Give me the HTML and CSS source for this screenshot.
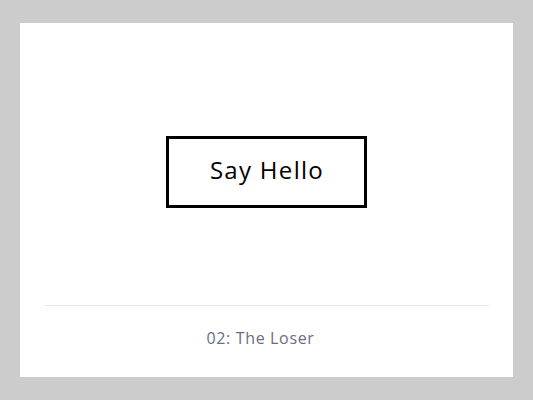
FILE: index.html
```html
<!DOCTYPE html>
<html lang="en">
<head>
<meta charset="utf-8">
<title>Say Hello</title>
<link rel="stylesheet" href="styles.css">
</head>
<body>
<div class="card">
  <div class="stage">
    <button class="hello">Say Hello</button>
  </div>
  <div class="footer">
    <div class="rule"></div>
    <p class="caption">02: The Loser</p>
  </div>
</div>
</body>
</html>
```
FILE: styles.css
```css
html, body {
  margin: 0;
  padding: 0;
}
body {
  background: #cccccc;
  padding: 23px 20px;
  font-family: "Open Sans", "Liberation Sans", sans-serif;
}
.card {
  background: #ffffff;
  height: 354px;
  width: 493px;
  display: flex;
  flex-direction: column;
}
.stage {
  height: 282px;
  box-sizing: border-box;
  padding-top: 16px;
  display: flex;
  align-items: center;
  justify-content: center;
}
.hello {
  width: 201px;
  height: 72px;
  box-sizing: border-box;
  border: 3px solid #000;
  background: #fff;
  color: #000;
  font-family: "Open Sans", "Liberation Sans", sans-serif;
  font-size: 24px;
  font-weight: 400;
  letter-spacing: 1.3px;
  padding: 0 0 5px 1px;
  cursor: pointer;
}
.footer {
  padding: 0 24px 0 25px;
  flex: 1;
  display: flex;
  flex-direction: column;
}
.rule {
  height: 1px;
  background: #e6e6e6;
}
.caption {
  margin: 0;
  flex: 1;
  display: flex;
  align-items: center;
  justify-content: center;
  padding: 0 13px 8px 0;
  color: #6b6e80;
  font-size: 16px;
  letter-spacing: 0.65px;
}
```
